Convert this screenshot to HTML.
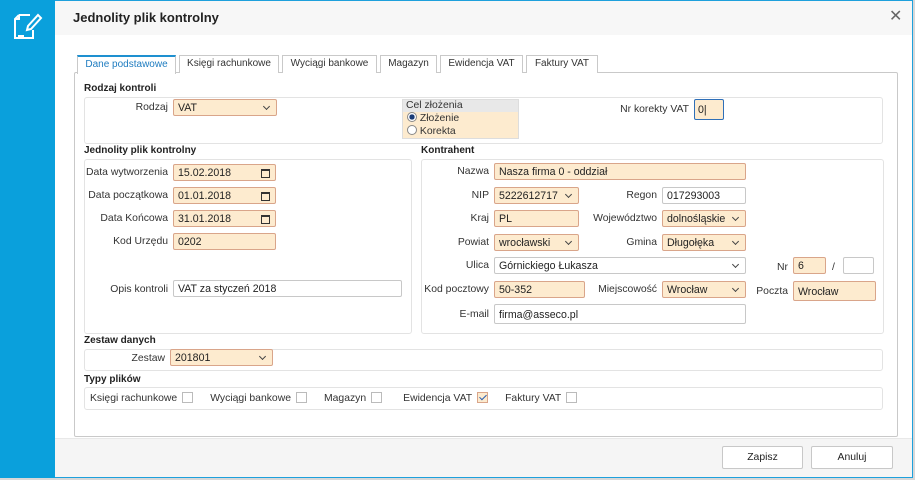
<!DOCTYPE html><html><head><meta charset="utf-8"><style>
*{box-sizing:border-box;margin:0;padding:0}
body{width:915px;height:480px;position:relative;background:#d8d8d8;font-family:"Liberation Sans",sans-serif;font-size:10.4px;color:#333;overflow:hidden}
.a{position:absolute}
.win{left:0;top:0;width:913px;height:478px;background:#fff;border:1px solid #1ea0dc;border-left:none}
.side{left:0;top:0;width:55px;height:478px;background:#0aa0dc}
.lbl{position:absolute;text-align:right;white-space:nowrap;line-height:13px}
.in{position:absolute;height:17px;border:1px solid #d9a58a;background:#fdebcf;border-radius:2px;padding:1px 4px 0;display:flex;align-items:center;white-space:nowrap;color:#222;font-size:10.6px;line-height:12px}
.w{background:#fff;border-color:#c8c8c8}
.sel::after{content:"";position:absolute;right:7px;top:4px;width:4px;height:4px;border-right:1px solid #444;border-bottom:1px solid #444;transform:rotate(45deg)}
.cal::after{content:"";position:absolute;right:5px;top:4px;width:7px;height:6px;border:1px solid #333;border-top-width:2px}
.box{position:absolute;border:1px solid #e3e3e3;border-radius:3px;background:#fff}
.h{position:absolute;font-weight:bold;font-size:10px;color:#222}
.tab{position:absolute;top:55px;height:18px;border:1px solid #c9c9c9;border-bottom:none;background:#fff;text-align:center;line-height:16px;font-size:10px;color:#333}
.cb{display:inline-block;width:11px;height:11px;border:1px solid #bbb;vertical-align:-2px;margin:0 17px 0 5px}
.btn{position:absolute;top:446px;height:23px;border:1px solid #c8c8c8;background:#fff;text-align:center;line-height:21px;border-radius:2px;color:#222}
</style></head><body>
<div class="a win"></div>
<div class="a side"></div>
<svg class="a" style="left:12px;top:12px" width="32" height="30" viewBox="0 0 32 30" fill="none" stroke="#fff" stroke-width="2"><path d="M7 3h11M7 3l-4 4v19h18v-8M3 7h4V3"/><path d="M26 3l3 3-10 11-4 1 1-4z"/><path d="M6 24h6"/></svg>
<div class="a" style="left:55px;top:1px;width:857px;height:34px;background:#f7f7f7"></div>
<div class="a" style="left:73px;top:10px;font-size:13px;font-weight:bold;color:#222">Jednolity plik kontrolny</div>
<div class="a" style="left:889px;top:6px;font-size:16px;color:#666">✕</div>
<div class="a" style="left:55px;top:438px;width:857px;height:39px;background:#f5f5f5;border-top:1px solid #e8e8e8"></div>
<div class="btn" style="left:722px;width:81px">Zapisz</div>
<div class="btn" style="left:811px;width:82px">Anuluj</div>

<div class="a" style="left:74px;top:72px;width:824px;height:365px;border:1px solid #c9c9c9;border-radius:2px"></div>
<div class="tab" style="left:77px;width:99px;height:19px;border-top:2px solid #1e90d0;color:#1e7cc0;z-index:2">Dane podstawowe</div>
<div class="tab" style="left:179px;width:100px">Księgi rachunkowe</div>
<div class="tab" style="left:282px;width:95px">Wyciągi bankowe</div>
<div class="tab" style="left:380px;width:57px">Magazyn</div>
<div class="tab" style="left:440px;width:83px">Ewidencja VAT</div>
<div class="tab" style="left:526px;width:72px">Faktury VAT</div>

<div class="h" style="left:84px;top:83px">Rodzaj kontroli</div>
<div class="box" style="left:84px;top:97px;width:799px;height:47px"></div>
<div class="lbl" style="right:747px;top:101px">Rodzaj</div>
<div class="in sel" style="left:173px;top:99px;width:104px">VAT</div>
<div class="a" style="left:402px;top:99px;width:117px;height:40px;background:#fdebcf;border:1px solid #ddd"><div style="background:#e8e8e8;height:12px;line-height:12px;padding-left:3px">Cel złożenia</div>
<div style="padding-left:4px;line-height:13px"><span style="display:inline-block;width:10px;height:10px;border-radius:50%;border:1px solid #888;background:radial-gradient(#1a3c78 45%,#fff 50%);vertical-align:-1px"></span> Złożenie<br><span style="display:inline-block;width:10px;height:10px;border-radius:50%;border:1px solid #888;background:#fff;vertical-align:-1px"></span> Korekta</div></div>
<div class="lbl" style="right:226px;top:103px">Nr korekty VAT</div>
<div class="in" style="left:694px;top:99px;width:30px;height:21px;border-color:#2f6fb8;padding-left:3px">0|</div>

<div class="h" style="left:84px;top:145px">Jednolity plik kontrolny</div>
<div class="box" style="left:84px;top:159px;width:328px;height:175px"></div>
<div class="lbl" style="right:747px;top:166px">Data wytworzenia</div>
<div class="in cal" style="left:173px;top:164px;width:103px">15.02.2018</div>
<div class="lbl" style="right:747px;top:189px">Data początkowa</div>
<div class="in cal" style="left:173px;top:187px;width:103px">01.01.2018</div>
<div class="lbl" style="right:747px;top:212px">Data Końcowa</div>
<div class="in cal" style="left:173px;top:210px;width:103px">31.01.2018</div>
<div class="lbl" style="right:747px;top:235px">Kod Urzędu</div>
<div class="in" style="left:173px;top:233px;width:103px">0202</div>
<div class="lbl" style="right:747px;top:283px">Opis kontroli</div>
<div class="in w" style="left:173px;top:280px;width:229px">VAT za styczeń 2018</div>

<div class="h" style="left:421px;top:145px">Kontrahent</div>
<div class="box" style="left:421px;top:159px;width:463px;height:175px"></div>
<div class="lbl" style="right:426px;top:165px">Nazwa</div>
<div class="in" style="left:494px;top:163px;width:252px">Nasza firma 0 - oddział</div>
<div class="lbl" style="right:426px;top:189px">NIP</div>
<div class="in sel" style="left:494px;top:187px;width:85px">5222612717</div>
<div class="lbl" style="right:258px;top:189px">Regon</div>
<div class="in w" style="left:662px;top:187px;width:84px">017293003</div>
<div class="lbl" style="right:426px;top:212px">Kraj</div>
<div class="in" style="left:494px;top:210px;width:85px">PL</div>
<div class="lbl" style="right:258px;top:212px">Województwo</div>
<div class="in sel" style="left:662px;top:210px;width:84px">dolnośląskie</div>
<div class="lbl" style="right:426px;top:236px">Powiat</div>
<div class="in sel" style="left:494px;top:234px;width:85px">wrocławski</div>
<div class="lbl" style="right:258px;top:236px">Gmina</div>
<div class="in sel" style="left:662px;top:234px;width:84px">Długołęka</div>
<div class="lbl" style="right:426px;top:259px">Ulica</div>
<div class="in w sel" style="left:494px;top:257px;width:252px">Górnickiego Łukasza</div>
<div class="lbl" style="right:127px;top:261px">Nr</div>
<div class="in" style="left:793px;top:257px;width:33px">6</div>
<div class="lbl" style="left:832px;top:261px">/</div>
<div class="in w" style="left:843px;top:257px;width:31px"></div>
<div class="lbl" style="right:426px;top:283px">Kod pocztowy</div>
<div class="in" style="left:494px;top:281px;width:91px">50-352</div>
<div class="lbl" style="right:258px;top:283px">Miejscowość</div>
<div class="in sel" style="left:662px;top:281px;width:84px">Wrocław</div>
<div class="lbl" style="right:127px;top:285px">Poczta</div>
<div class="in" style="left:793px;top:281px;width:83px;height:20px">Wrocław</div>
<div class="lbl" style="right:426px;top:308px">E-mail</div>
<div class="in w" style="left:494px;top:304px;width:252px;height:20px">firma@asseco.pl</div>

<div class="h" style="left:84px;top:335px">Zestaw danych</div>
<div class="box" style="left:84px;top:349px;width:799px;height:22px"></div>
<div class="lbl" style="right:750px;top:352px">Zestaw</div>
<div class="in sel" style="left:170px;top:349px;width:103px">201801</div>
<div class="h" style="left:84px;top:374px">Typy plików</div>
<div class="box" style="left:84px;top:387px;width:799px;height:23px"></div>
<div class="a" style="left:90px;top:392px;white-space:nowrap">Księgi rachunkowe<span class="cb"></span>Wyciągi bankowe<span class="cb"></span>Magazyn<span class="cb" style="margin-right:21px"></span>Ewidencja VAT<span class="cb" style="border-color:#d9a58a;background:#fdebcf;position:relative"><span style="position:absolute;left:3px;top:0;width:4px;height:7px;border-right:1.5px solid #2a5fb0;border-bottom:1.5px solid #2a5fb0;transform:rotate(45deg)"></span></span>Faktury VAT<span class="cb"></span></div>
</body></html>
